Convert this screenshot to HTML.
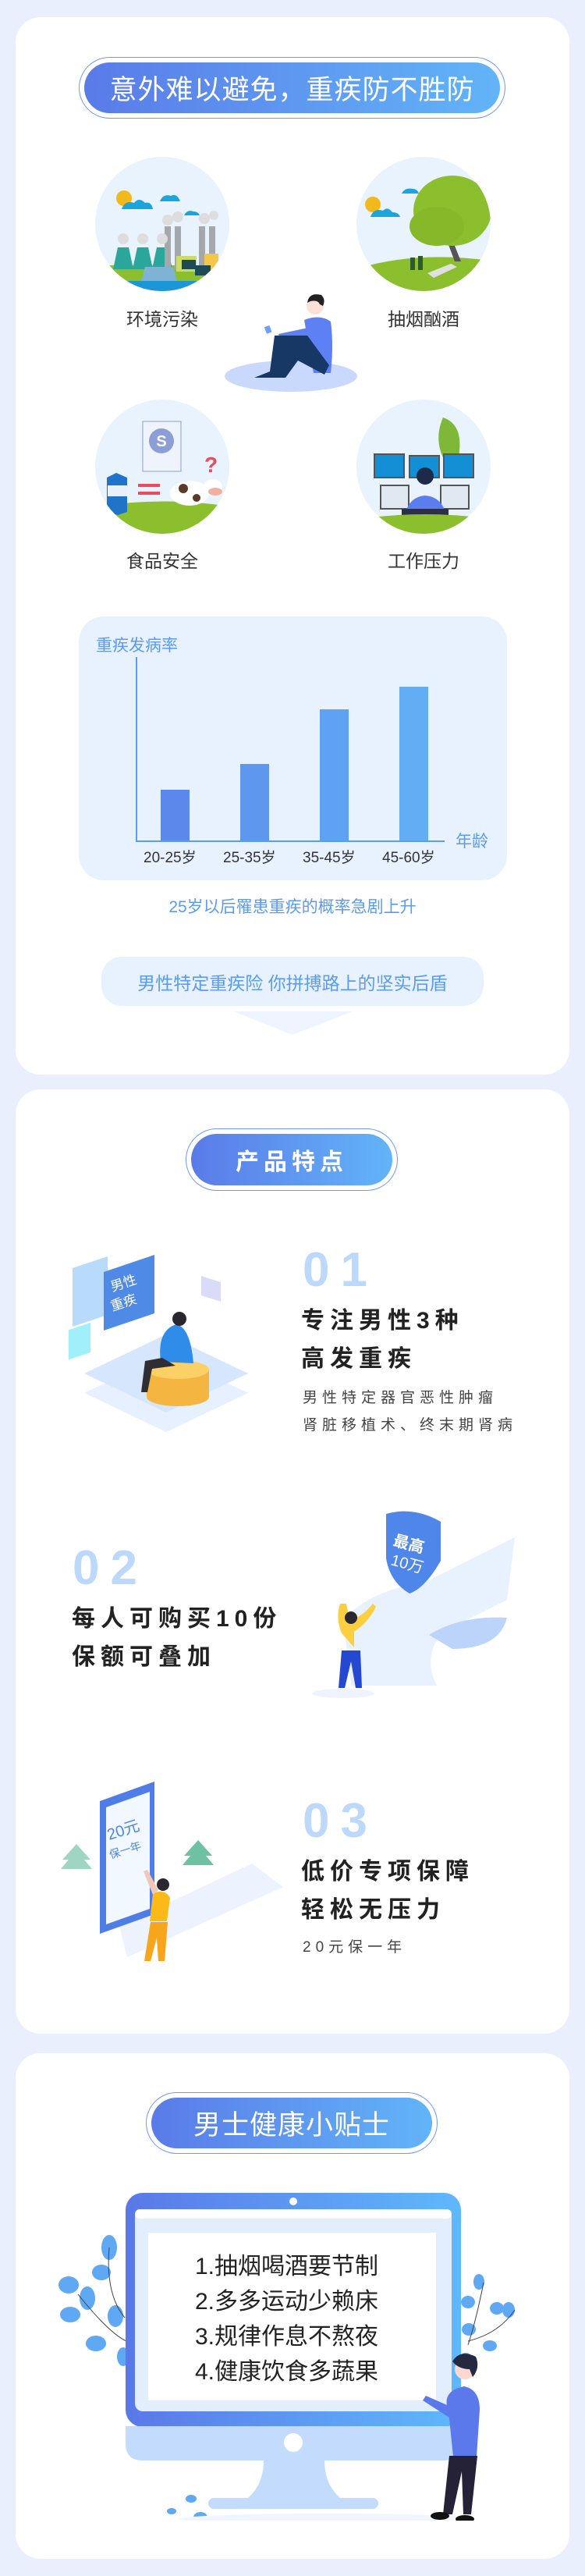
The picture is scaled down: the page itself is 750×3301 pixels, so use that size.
<!DOCTYPE html>
<html><head><meta charset="utf-8"><style>
*{margin:0;padding:0;box-sizing:border-box}
body{width:750px;height:3301px;background:#e9effd;position:relative;overflow:hidden;font-family:"Liberation Sans","Noto Sans CJK SC",sans-serif}
.card{position:absolute;left:20px;width:710px;background:#fff;border-radius:32px}
.abs{position:absolute}
.pill{position:absolute;border:1.5px solid #6f98ee;border-radius:60px}
.pill .in{position:absolute;left:6px;right:6px;top:6px;bottom:6px;border-radius:60px;background:linear-gradient(90deg,#5a7be8,#62b4f8);color:#fff;display:flex;align-items:center;justify-content:center}
.lbl{position:absolute;font-size:23px;color:#333;width:160px;text-align:center}
.num{position:absolute;font-size:62px;color:#bcd8fb;font-weight:bold;letter-spacing:14px;line-height:1}
.ft{position:absolute;font-size:30px;font-weight:bold;color:#222;letter-spacing:7px;line-height:49px}
.fd{position:absolute;font-size:19px;color:#444;letter-spacing:6px;line-height:35px}
</style></head><body>

<!-- CARD 1 -->
<div class="card" style="top:22px;height:1355px"></div>
<div class="pill" style="left:101px;top:73px;width:547px;height:79px"><div class="in" style="font-size:35px;letter-spacing:1px">意外难以避免，重疾防不胜防</div></div>

<svg class="abs" style="left:0;top:190px" width="750" height="520" viewBox="0 190 750 520">
<defs>
<clipPath id="c1"><circle cx="208" cy="287" r="86"/></clipPath>
<clipPath id="c2"><circle cx="543" cy="287" r="86"/></clipPath>
<clipPath id="c3"><circle cx="208" cy="598" r="86"/></clipPath>
<clipPath id="c4"><circle cx="543" cy="598" r="86"/></clipPath>
</defs>
<circle cx="208" cy="287" r="86" fill="#e8f3fe"/>
<g clip-path="url(#c1)">
<circle cx="159" cy="254" r="10" fill="#f2b91a"/>
<path d="M156 268q4-12 16-8q6-8 14 0q8-2 10 8z" fill="#1aa6dc"/>
<path d="M205 258q4-10 14-7q8-4 12 7z" fill="#1aa6dc"/>
<path d="M236 276q4-8 12-5q6 0 8 5z" fill="#1aa6dc"/>
<rect x="100" y="340" width="220" height="40" fill="#8cbf2e"/>
<path d="M145 345l6-28h14l6 28z M170 345l6-28h14l6 28z M195 345l6-28h14l6 28z" fill="#2aa79a"/>
<rect x="211" y="290" width="8" height="55" fill="#a4a8ad"/><rect x="224" y="290" width="8" height="55" fill="#a4a8ad"/>
<rect x="255" y="290" width="8" height="55" fill="#a4a8ad"/><rect x="268" y="290" width="8" height="55" fill="#a4a8ad"/>
<rect x="226" y="328" width="26" height="20" fill="#c9dc6a"/><rect x="262" y="325" width="18" height="22" fill="#f3c84a"/>
<rect x="233" y="333" width="18" height="12" fill="#1e4a55"/><rect x="250" y="340" width="20" height="13" fill="#1e4a55"/>
<path d="M178 372l8-30h36l8 30z" fill="#7fb3d6"/>
<rect x="120" y="360" width="170" height="20" fill="#1d96d8"/>
<circle cx="215" cy="282" r="7" fill="#ddd"/><circle cx="228" cy="278" r="7" fill="#ddd"/><circle cx="262" cy="280" r="7" fill="#ddd"/><circle cx="274" cy="276" r="6" fill="#ddd"/>
<circle cx="158" cy="306" r="7" fill="#ddd"/><circle cx="183" cy="306" r="7" fill="#ddd"/><circle cx="208" cy="306" r="7" fill="#ddd"/>
</g>
<circle cx="543" cy="287" r="86" fill="#e8f3fe"/>
<g clip-path="url(#c2)">
<circle cx="478" cy="262" r="10" fill="#f2b91a"/>
<path d="M475 278q4-12 16-8q6-6 12 2q8 0 10 6z" fill="#1aa6dc"/>
<path d="M515 248q4-8 14-6q6 0 8 6z" fill="#1aa6dc"/>
<path d="M455 345q80-25 180 -10v60h-180z" fill="#8cbf2e"/>
<path d="M577 300l14 35h-8l-12-32z" fill="#555"/>
<ellipse cx="580" cy="270" rx="50" ry="45" fill="#8cbf2e"/>
<ellipse cx="560" cy="290" rx="35" ry="25" fill="#86b82a"/>
<rect x="526" y="330" width="6" height="16" fill="#2d5b2d"/><rect x="536" y="328" width="6" height="18" fill="#2d5b2d"/>
<path d="M548 350l30-12l8 4l-30 14z" fill="#e0e0e0"/>
</g>
<ellipse cx="373" cy="482" rx="85" ry="20" fill="#c9d9fd"/>
<circle cx="404" cy="392" r="11" fill="#fde0d6"/><path d="M394 388q2-14 18-10q6 6 2 14l-4-2q-2-6-12-4z" fill="#222"/>
<path d="M390 410q20-8 34 2q4 30 0 66h-22z" fill="#5e80f5"/>
<path d="M395 420l-38 8l2 8l40-4z" fill="#5e80f5"/>
<path d="M352 430l42 0l28 38l-6 12l-34-18l-16 22l-40 0l20-8z" fill="#173864"/>
<rect x="340" y="418" width="7" height="9" fill="#6fa0f7" transform="rotate(-20 343 422)"/>
<circle cx="208" cy="598" r="86" fill="#e8f3fe"/>
<g clip-path="url(#c3)">
<path d="M120 650q90-15 180 0v40h-180z" fill="#8cbf2e"/>
<rect x="183" y="540" width="49" height="64" fill="#eef3fc" stroke="#8c9ed6"/>
<circle cx="207" cy="565" r="16" fill="#8c9ed6"/><text x="207" y="572" font-size="20" fill="#fff" text-anchor="middle" font-weight="bold">S</text>
<path d="M137 612l12-6l14 6v44l-12 4l-14-4z" fill="#1f74c9"/><rect x="138" y="622" width="25" height="14" fill="#e8f0fc"/>
<rect x="177" y="620" width="28" height="4" fill="#e94c5a"/><rect x="177" y="630" width="28" height="4" fill="#e94c5a"/>
<ellipse cx="243" cy="632" rx="25" ry="16" fill="#fff"/><circle cx="235" cy="626" r="6" fill="#5a3b2a"/><circle cx="252" cy="638" r="5" fill="#5a3b2a"/>
<ellipse cx="273" cy="624" rx="12" ry="10" fill="#fff"/><ellipse cx="276" cy="630" rx="9" ry="5" fill="#f0b0a0"/>
<text x="262" y="605" font-size="28" fill="#e94c5a" font-weight="bold">?</text>
</g>
<circle cx="543" cy="598" r="86" fill="#e8f3fe"/>
<g clip-path="url(#c4)">
<path d="M568 535q30 10 18 60l-12 2q-20-30-6-62z" fill="#7fb838"/>
<rect x="480" y="582" width="38" height="30" fill="#138fd6" stroke="#555" stroke-width="2"/>
<rect x="525" y="584" width="38" height="28" fill="#138fd6" stroke="#555" stroke-width="2"/>
<rect x="569" y="582" width="38" height="30" fill="#138fd6" stroke="#555" stroke-width="2"/>
<rect x="488" y="622" width="36" height="30" fill="#e0e8f2" stroke="#555" stroke-width="2"/>
<rect x="565" y="622" width="36" height="30" fill="#e0e8f2" stroke="#555" stroke-width="2"/>
<circle cx="545" cy="610" r="11" fill="#1d2a4a"/>
<path d="M518 665q4-28 27-30q24 2 28 30z" fill="#5b7df0"/>
<rect x="515" y="652" width="60" height="12" fill="#2c2f48"/>
<path d="M460 665q85-12 170 0v30h-170z" fill="#8cbf2e"/>
</g>
</svg>
<div class="lbl" style="left:128px;top:390px">环境污染</div>
<div class="lbl" style="left:463px;top:390px">抽烟酗酒</div>
<div class="lbl" style="left:128px;top:700px">食品安全</div>
<div class="lbl" style="left:463px;top:700px">工作压力</div>

<div class="abs" style="left:101px;top:790px;width:549px;height:338px;background:#e8f2fe;border-radius:32px"></div>
<div class="abs" style="left:123px;top:811px;font-size:21px;color:#5b9bf0">重疾发病率</div>
<div class="abs" style="left:174px;top:842px;width:2px;height:237px;background:#5b9bf0"></div>
<div class="abs" style="left:174px;top:1077px;width:396px;height:2px;background:#5b9bf0"></div>
<div class="abs" style="left:206px;top:1012px;width:37px;height:65px;background:#5b88ea"></div>
<div class="abs" style="left:308px;top:979px;width:37px;height:98px;background:#5d97ee"></div>
<div class="abs" style="left:410px;top:909px;width:37px;height:168px;background:#5fa1f2"></div>
<div class="abs" style="left:512px;top:880px;width:37px;height:197px;background:#63adf5"></div>
<div class="abs" style="left:584px;top:1062px;font-size:21px;color:#5b9bf0">年龄</div>
<div class="abs" style="left:184px;top:1084px;font-size:19px;color:#333;width:400px;display:flex">
<span style="width:102px">20-25岁</span><span style="width:102px">25-35岁</span><span style="width:102px">35-45岁</span><span>45-60岁</span></div>
<div class="abs" style="left:0;width:750px;top:1146px;text-align:center;font-size:21px;color:#5b9bf0">25岁以后罹患重疾的概率急剧上升</div>
<div class="abs" style="left:130px;top:1226px;width:490px;height:63px;background:#e8f2fe;border-radius:26px;color:#5b9bf0;font-size:23px;display:flex;align-items:center;justify-content:center">男性特定重疾险 你拼搏路上的坚实后盾</div>
<svg class="abs" style="left:299px;top:1295px" width="153" height="32"><path d="M0 1H153L76 31z" fill="#eef5fe"/></svg>

<!-- CARD 2 -->
<div class="card" style="top:1396px;height:1210px"></div>
<div class="pill" style="left:238px;top:1446px;width:272px;height:80px"><div class="in" style="font-size:30px;font-weight:bold;letter-spacing:6px">产品特点</div></div>

<svg class="abs" style="left:88px;top:1590px" width="250" height="265" viewBox="0 0 250 265">
<path d="M125 245L20 195L125 145L230 195z" fill="#e6f0fe"/>
<path d="M125 220L20 170L125 120L230 170z" fill="#d6e6fd"/>
<path d="M5 35l45-15v75l-45 15z" fill="#a6d2fb" opacity=".8"/>
<path d="M-2 115l30-10v38l-30 10z" fill="#9ff0fb"/>
<path d="M170 45l25 8v25l-25-8z" fill="#d9dbf8"/>
<path d="M45 40l65-22v75l-65 22z" fill="#4e8ae6"/>
<text x="56" y="65" font-size="17" fill="#fff" transform="rotate(-18 56 65)">男性</text>
<text x="56" y="90" font-size="17" fill="#fff" transform="rotate(-18 56 90)">重疾</text>
<ellipse cx="140" cy="200" rx="40" ry="12" fill="#f4b640"/>
<rect x="100" y="165" width="80" height="35" fill="#f4b640"/>
<ellipse cx="140" cy="165" rx="40" ry="12" fill="#fbd165"/>
<path d="M118 155q-5-40 20-48q18 4 22 50z" fill="#2f8ce8"/>
<circle cx="142" cy="100" r="9" fill="#2b2730"/>
<path d="M120 150l-22 4l-5 40l8 0l6-30l30-4z" fill="#2f2f33"/>
</svg>
<div class="num" style="left:388px;top:1597px">01</div>
<div class="ft" style="left:386px;top:1668px">专注男性3种<br>高发重疾</div>
<div class="fd" style="left:388px;top:1774px">男性特定器官恶性肿瘤<br>肾脏移植术、终末期肾病</div>

<svg class="abs" style="left:400px;top:1925px" width="280" height="255" viewBox="0 0 280 255">
<path d="M40 150q40-40 100-45l120-60l-10 80q-40 20-80 40q-30 30-10 70h-110z" fill="#e8f1fe"/>
<path d="M150 170q40-25 100-22q-10 40-70 40z" fill="#bcd3fa"/>
<path d="M95 15q35-10 70 10v50q-20 35-40 42q-25-15-30-45z" fill="#4f86ea"/>
<text x="103" y="55" font-size="20" fill="#fff" font-weight="bold" transform="rotate(15 103 55)">最高</text>
<text x="100" y="80" font-size="20" fill="#fff" transform="rotate(15 100 80)">10万</text>
<ellipse cx="40" cy="245" rx="40" ry="6" fill="#eef3fe"/>
<path d="M38 168q-8-20 -2-38l8 0q2 14 8 20q14-5 26-20l4 4q-10 20-28 32l0 20z" fill="#fbcf3f"/>
<circle cx="50" cy="148" r="8" fill="#2b2730"/>
<path d="M38 190h24l2 48h-8l-6-34l-8 34h-8z" fill="#2448cf"/>
</svg>
<div class="num" style="left:93px;top:1979px">02</div>
<div class="ft" style="left:92px;top:2050px">每人可购买10份<br>保额可叠加</div>

<svg class="abs" style="left:68px;top:2278px" width="300" height="250" viewBox="0 0 300 250">
<path d="M95 230l200-90l-40-30l-170 80z" fill="#edf3fe"/>
<path d="M60 30l70-25v170l-70 25z" fill="#4f7de8"/>
<path d="M68 38l56-20v150l-56 20z" fill="#f2f8ff"/>
<text x="72" y="80" font-size="20" fill="#4f86ea" transform="rotate(-18 72 80)">20元</text>
<text x="74" y="104" font-size="14" fill="#4f86ea" transform="rotate(-18 74 104)">保一年</text>
<path d="M12 105l18-20l18 20l-8 0l10 12h-40l10-12z" fill="#9fd6c3"/>
<path d="M168 100l18-20l18 20l-8 0l10 12h-40l10-12z" fill="#6cc2a3"/>
<circle cx="141" cy="137" r="8" fill="#2b2730"/>
<path d="M128 148q16-6 22 6l-4 30h-22z" fill="#fbba17"/>
<path d="M125 185h22l-4 50h-8l-2-30l-8 30h-8z" fill="#f7a61b"/>
<path d="M128 150l-12-30l5-2l14 26z" fill="#f4c6b8"/>
</svg>
<div class="num" style="left:388px;top:2303px">03</div>
<div class="ft" style="left:386px;top:2374px">低价专项保障<br>轻松无压力</div>
<div class="fd" style="left:388px;top:2478px">20元保一年</div>

<!-- CARD 3 -->
<div class="card" style="top:2631px;height:648px"></div>
<div class="pill" style="left:187px;top:2681px;width:374px;height:79px"><div class="in" style="font-size:35px;letter-spacing:1px">男士健康小贴士</div></div>

<svg class="abs" style="left:60px;top:2800px" width="620" height="430" viewBox="60 2800 620 430">
<defs><linearGradient id="mg" x1="0" x2="1"><stop offset="0" stop-color="#5a78e8"/><stop offset="1" stop-color="#5fb8fb"/></linearGradient></defs>
<g fill="#5fa8f4">
<ellipse cx="140" cy="2880" rx="10" ry="16"/><ellipse cx="130" cy="2912" rx="12" ry="10"/><ellipse cx="88" cy="2928" rx="13" ry="11"/><ellipse cx="112" cy="2945" rx="10" ry="15"/><ellipse cx="90" cy="2966" rx="13" ry="10"/><ellipse cx="123" cy="3003" rx="13" ry="10"/><ellipse cx="148" cy="2968" rx="10" ry="14"/><ellipse cx="158" cy="3020" rx="8" ry="12"/>
<ellipse cx="614" cy="2924" rx="7" ry="10"/><ellipse cx="600" cy="2950" rx="9" ry="8"/><ellipse cx="637" cy="2958" rx="9" ry="8"/><ellipse cx="652" cy="2960" rx="8" ry="10"/><ellipse cx="601" cy="2985" rx="9" ry="8"/><ellipse cx="628" cy="3006" rx="9" ry="7"/><ellipse cx="597" cy="3022" rx="8" ry="7"/>
<ellipse cx="245" cy="3202" rx="7" ry="5"/><ellipse cx="220" cy="3218" rx="6" ry="4"/><ellipse cx="257" cy="3226" rx="9" ry="7"/>
</g>
<path d="M100 2940q40 50 62 60M140 2880q-5 60 20 90M620 2925q-10 50-20 80M660 2960q-20 30-60 40" stroke="#444" fill="none"/>
<ellipse cx="420" cy="3228" rx="190" ry="7" fill="#f0f5fe"/>
<rect x="161" y="2810" width="430" height="300" rx="22" fill="url(#mg)"/>
<path d="M161 3109h430v22q0 22-22 22h-386q-22 0-22-22z" fill="#c3dcfd"/>
<circle cx="376" cy="2821" r="5" fill="#fff"/>
<rect x="173" y="2831" width="406" height="259" rx="10" fill="#e2eefd"/>
<rect x="173" y="2831" width="406" height="12" rx="6" fill="#fff"/>
<rect x="190" y="2861" width="369" height="215" fill="#fff"/>
<circle cx="376" cy="3130" r="12" fill="#fff"/>
<path d="M338 3153h78q0 30 20 48h-118q20-18 20-48z" fill="#c3dcfd"/>
<rect x="267" y="3201" width="218" height="14" rx="7" fill="#c3dcfd"/>
<circle cx="596" cy="3036" r="13" fill="#fbd8d2"/><path d="M580 3026q10-16 30-6q6 14-4 26l-4-10q-14 0-22-10z" fill="#242942"/>
<path d="M575 3090q-10-26 20-32q20 4 20 30l-4 60h-30z" fill="#5c79ec"/>
<path d="M580 3085l-34-15l-4 6l34 22z" fill="#5c79ec"/>
<path d="M576 3147h36l-8 75h-10l-2-55l-12 55h-12z" fill="#252136"/>
<ellipse cx="564" cy="3224" rx="12" ry="5" fill="#111"/><ellipse cx="596" cy="3228" rx="12" ry="5" fill="#111"/>
</svg>
<div class="abs" style="left:250px;top:2882px;font-size:30px;color:#222;line-height:45px">1.抽烟喝酒要节制<br>2.多多运动少赖床<br>3.规律作息不熬夜<br>4.健康饮食多蔬果</div>
</body></html>
